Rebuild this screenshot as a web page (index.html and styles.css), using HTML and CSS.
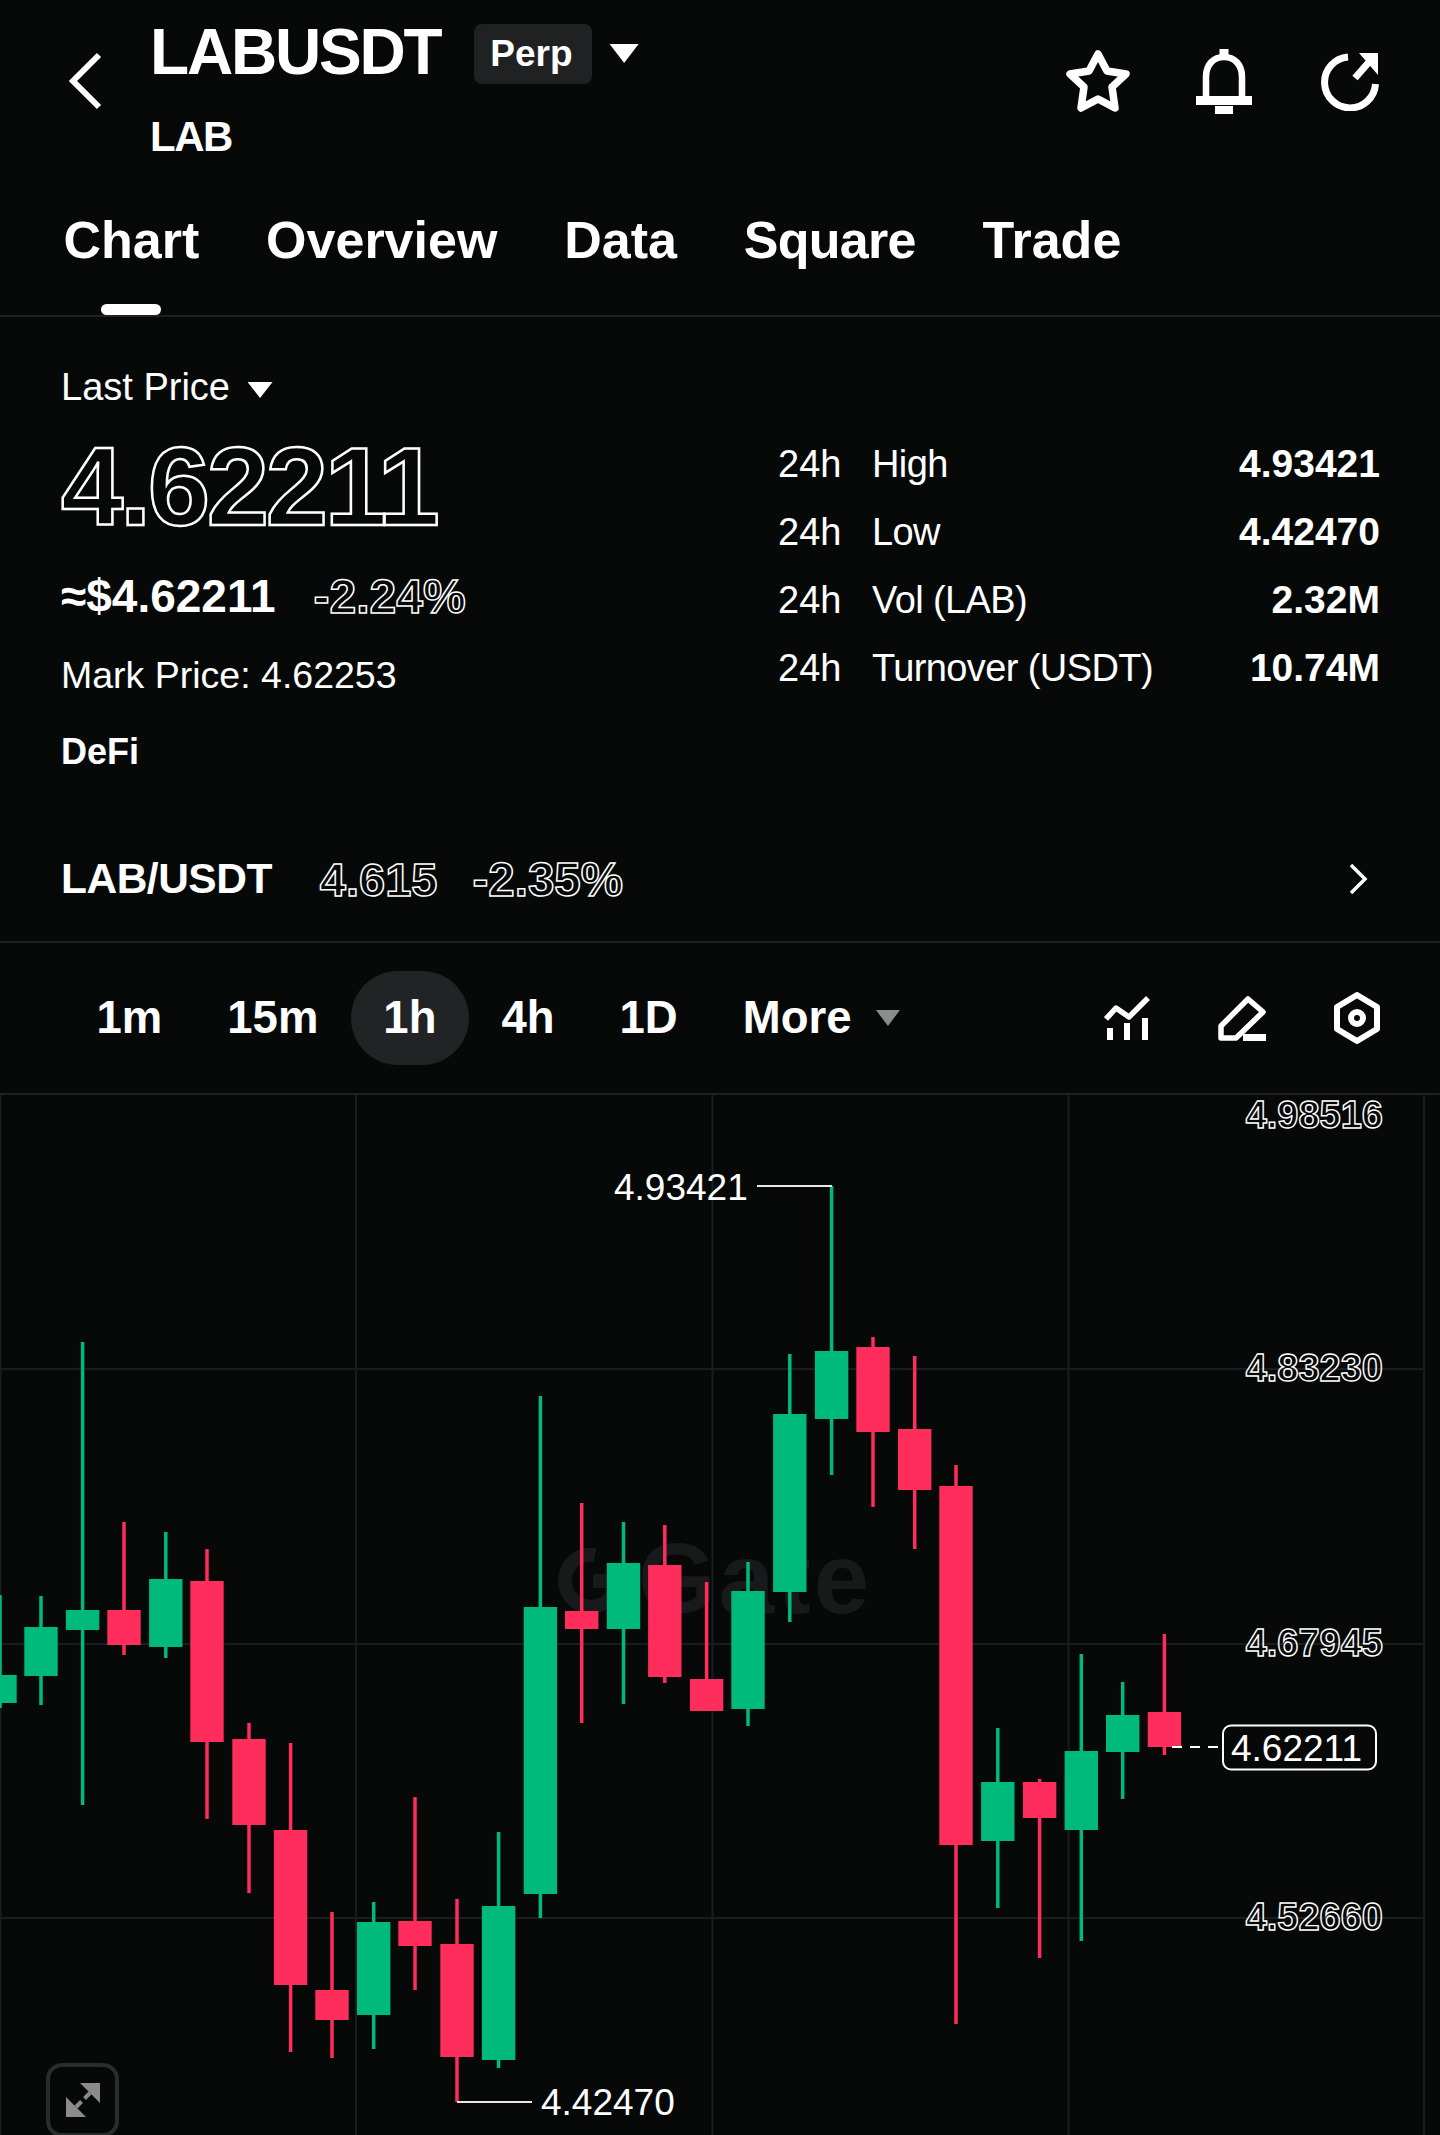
FILE: index.html
```html
<!DOCTYPE html>
<html>
  <head>
    <meta charset="UTF-8" />
    <title>LABUSDT Perp</title>
    <link rel="stylesheet" href="styles.css">
  </head>
  <body>
    <div class="page">
      <header class="top">
        <svg class="back" viewBox="0 0 33 58"><path d="M30 3 L4 29 L30 55" /></svg>
        <div class="title">
          <div class="title-row">
            <span class="symbol">LABUSDT</span>
            <span class="badge">Perp</span>
            <span class="caret caret-title"></span>
          </div>
          <div class="base">LAB</div>
        </div>
        <div class="top-icons">
          <svg class="icon-star" viewBox="0 0 66 64"><path d="M33 5 L42 22 L61 25 L47 38 L50 59 L33 50 L16 59 L19 38 L5 25 L24 22 Z" /></svg>
          <svg class="icon-bell" viewBox="0 0 56 65">
            <path class="line" d="M10 48 V28 C10 15 18 8 28 8 C38 8 46 15 46 28 V48" />
            <rect x="23.5" y="0" width="9" height="9" />
            <rect x="0" y="47" width="56" height="9" />
            <rect x="19" y="57" width="18" height="8" />
          </svg>
          <svg class="icon-share" viewBox="0 0 58 60">
            <path class="line" d="M27 6 A25.5 25.5 0 1 0 54.5 33" />
            <path class="line" d="M34 27 L48 11" />
            <path d="M38 2 H57 V24 Z" />
          </svg>
        </div>
      </header>

      <nav class="tabs">
        <a class="tab active">Chart</a>
        <a class="tab">Overview</a>
        <a class="tab">Data</a>
        <a class="tab tab-tight">Square</a>
        <a class="tab">Trade</a>
      </nav>

      <section class="info">
        <div class="price-col">
          <div class="last-label">Last Price <span class="caret caret-small"></span></div>
          <div class="last-price outline">4.62211</div>
          <div class="sub-row">
            <span class="usd">≈$4.62211</span>
            <span class="change outline">-2.24%</span>
          </div>
          <div class="mark">Mark Price: 4.62253</div>
          <div class="sector">DeFi</div>
        </div>
        <div class="stats">
          <div class="stat"><span class="period">24h</span><span class="stat-name">High</span><span class="stat-value">4.93421</span></div>
          <div class="stat"><span class="period">24h</span><span class="stat-name">Low</span><span class="stat-value">4.42470</span></div>
          <div class="stat"><span class="period">24h</span><span class="stat-name">Vol (LAB)</span><span class="stat-value">2.32M</span></div>
          <div class="stat"><span class="period">24h</span><span class="stat-name">Turnover (USDT)</span><span class="stat-value">10.74M</span></div>
        </div>
      </section>

      <section class="pair">
        <span class="pair-name">LAB/USDT</span>
        <span class="pair-price outline">4.615</span>
        <span class="pair-change outline">-2.35%</span>
        <svg class="chevron" viewBox="0 0 20 32"><path d="M3 2 L17 16 L3 30" /></svg>
      </section>

      <section class="toolbar">
        <a class="range">1m</a>
        <a class="range">15m</a>
        <a class="range active">1h</a>
        <a class="range">4h</a>
        <a class="range">1D</a>
        <a class="range">More</a>
        <span class="caret caret-more"></span>
        <div class="tools">
          <svg class="tool-indicator" viewBox="0 0 46 45">
            <path class="line" d="M2 23 L12 12 L25 21 L44 2" />
            <rect x="3" y="32" width="6" height="12" />
            <rect x="20" y="27" width="6" height="17" />
            <rect x="38" y="22" width="6" height="22" />
          </svg>
          <svg class="tool-draw" viewBox="0 0 48 46">
            <path class="line" d="M30 4 L45 17 L18 43 H3 V31 Z" />
            <rect x="25" y="39" width="23" height="7" />
          </svg>
          <svg class="tool-settings" viewBox="0 0 46 52">
            <path class="line" d="M23 3 L43 15 V37 L23 49 L3 37 V15 Z" />
            <circle class="line" cx="23" cy="26" r="6" />
          </svg>
        </div>
      </section>

      <section class="chart">
        <!-- viewBox uses page coordinates so the candle values read like the screenshot -->
        <svg class="plot" viewBox="0 1095 1440 1040">
          <g class="grid">
            <path d="M0.5 1095V2135M356 1095V2135M712.5 1095V2135M1068.5 1095V2135M1424 1095V2135" />
            <path d="M0 1369H1424M0 1644H1424M0 1918H1424" />
          </g>
          <g class="watermark">
            <path d="M595 1555 A26 26 0 1 0 617 1581 H593" />
            <text x="638" y="1613">Gate</text>
          </g>
          <g class="up">
            <path class="wick" d="M0 1595V1708M41 1596V1705M82.6 1342V1805M165.8 1532V1658M373.7 1902V2049M498.6 1832V2068M540.4 1396V1918M623.5 1522V1704M748 1562V1726M789.8 1354V1622M831.6 1186V1475M997.8 1728V1908M1081.3 1654V1941M1122.7 1682V1799" />
            <path class="body" d="M0 1675V1703M41 1627V1676M82.6 1610V1630M165.8 1579V1647M373.7 1922V2015M498.6 1906V2060M540.4 1607V1894M623.5 1563V1629M748 1591V1709M789.8 1414V1592M831.6 1351V1419M997.8 1782V1841M1081.3 1751V1830M1122.7 1715V1752" />
          </g>
          <g class="down">
            <path class="wick" d="M124 1522V1655M207 1549V1819M249 1723V1893M290.6 1743V2052M332 1912V2058M415 1797V1990M457 1899V2102M581.7 1503V1723M664.8 1525V1683M706.6 1582V1711M873 1337V1507M914.7 1356V1549M956 1465V2024M1039.6 1779V1958M1164.4 1634V1755" />
            <path class="body" d="M124 1610V1645M207 1581V1742M249 1739V1825M290.6 1830V1985M332 1990V2020M415 1921V1946M457 1944V2057M581.7 1611V1629M664.8 1565V1677M706.6 1679V1711M873 1347V1432M914.7 1429V1490M956 1486V1845M1039.6 1782V1818M1164.4 1712V1747" />
          </g>
          <path class="leader" d="M757 1186H832M457 2102H532" />
          <path class="last-line" d="M1172 1747H1222" />
          <text class="mark-label" x="614" y="1200">4.93421</text>
          <text class="mark-label" x="541" y="2115">4.42470</text>
          <text class="axis" x="1383" y="1128">4.98516</text>
          <text class="axis" x="1383" y="1381">4.83230</text>
          <text class="axis" x="1383" y="1656">4.67945</text>
          <text class="axis" x="1383" y="1930">4.52660</text>
          <rect class="tag" x="1223" y="1725.5" width="153" height="44" rx="8" />
          <text class="mark-label" x="1231" y="1761">4.62211</text>
        </svg>
        <div class="expand">
          <svg viewBox="0 0 34 34">
            <path d="M14 0 H34 V20 Z M0 14 V34 H20 Z" />
            <path class="line" d="M24 10 L18.5 15.5 M15.5 18.5 L10 24" />
          </svg>
        </div>
      </section>
    </div>
  </body>
</html>
```
FILE: styles.css
```css
body {
  margin: 0;
  background-color: #070909;
  color: #fff;
  font-family: "Liberation Sans", Arial, sans-serif;
}
.page {
  width: 1440px;
  height: 2135px;
  overflow: hidden;
}
svg {
  display: block;
  fill: #fff;
}
svg .line {
  fill: none;
  stroke: #fff;
}
.outline {
  color: transparent;
  -webkit-text-stroke: 1.5px #fff;
  font-weight: 700;
}
.caret {
  display: inline-block;
  background-color: #fff;
  clip-path: polygon(0 0, 100% 0, 50% 100%);
}

/* top bar */
.top {
  display: flex;
  height: 190px;
  padding-right: 61px;
  box-sizing: border-box;
}
.back {
  width: 33px;
  height: 58px;
  margin: 52px 48px 0 69px;
  flex: none;
  fill: none;
  stroke: #fff;
  stroke-width: 6;
}
.title-row {
  display: flex;
  align-items: center;
  padding-top: 20px;
  height: 64px;
}
.symbol {
  font-size: 64px;
  line-height: 64px;
  font-weight: 700;
  letter-spacing: -2.2px;
}
.badge {
  margin: 4px 0 0 34px;
  padding: 0 19px 0 16px;
  height: 60px;
  line-height: 60px;
  background-color: #1f2122;
  border-radius: 8px;
  font-size: 37px;
  font-weight: 700;
}
.caret-title {
  width: 29px;
  height: 19px;
  margin: 3px 0 0 18px;
}
.base {
  margin-top: 31px;
  font-size: 42px;
  line-height: 44px;
  font-weight: 700;
  letter-spacing: -1.5px;
}
.top-icons {
  display: flex;
  align-items: center;
  margin: 48px 0 0 auto;
  height: 66px;
}
.icon-star {
  width: 66px;
  height: 64px;
  fill: none;
  stroke: #fff;
  stroke-width: 7.5;
  stroke-linejoin: round;
}
.icon-bell {
  width: 56px;
  height: 65px;
  margin-left: 65px;
}
.icon-bell .line {
  stroke-width: 6.5;
}
.icon-share {
  width: 58px;
  height: 60px;
  margin-left: 69px;
}
.icon-share .line {
  stroke-width: 7;
}

/* tabs */
.tabs {
  display: flex;
  gap: 66.8px;
  height: 101px;
  padding: 24px 0 0 63.5px;
  border-bottom: 2px solid #1e2122;
}
.tab {
  position: relative;
  font-size: 52px;
  line-height: 52px;
  font-weight: 700;
}
.tab-tight {
  letter-spacing: -0.7px;
}
.tab.active::after {
  content: "";
  position: absolute;
  left: 37px;
  bottom: 0;
  width: 60px;
  height: 11px;
  border-radius: 6px;
  background-color: #fff;
}

/* price block */
.info {
  display: flex;
  height: 454px;
  padding: 0 60px 0 61px;
}
.last-label {
  margin-top: 51px;
  font-size: 38px;
  line-height: 38px;
}
.caret-small {
  position: relative;
  top: -2px;
  width: 25px;
  height: 16px;
  margin-left: 7px;
}
.last-price {
  margin-top: 26px;
  font-size: 112px;
  line-height: 110px;
  letter-spacing: -3.3px;
  -webkit-text-stroke-width: 2.5px;
}
.sub-row {
  display: flex;
  align-items: center;
  margin-top: 31px;
  height: 46px;
}
.usd {
  font-size: 46px;
  font-weight: 700;
}
.change {
  margin-left: 38px;
  font-size: 48px;
}
.mark {
  margin-top: 37px;
  font-size: 37.5px;
  line-height: 38px;
}
.sector {
  margin-top: 39px;
  font-size: 36px;
  line-height: 38px;
  font-weight: 700;
}
.stats {
  width: 602px;
  margin: 113px 0 0 auto;
}
.stat {
  display: flex;
  align-items: center;
  height: 68px;
  font-size: 38px;
}
.period {
  width: 94px;
}
.stat-name {
  flex: 1;
  letter-spacing: -0.6px;
}
.stat-value {
  font-size: 39px;
  font-weight: 700;
}

/* spot pair row */
.pair {
  display: flex;
  align-items: center;
  height: 44px;
  padding: 86px 62px 40px 61px;
  border-bottom: 2px solid #1e2122;
}
.pair-name {
  font-size: 42.5px;
  font-weight: 700;
  letter-spacing: -0.5px;
  margin-right: 48px;
}
.pair-price {
  font-size: 47px;
}
.pair-change {
  margin-left: 35px;
  font-size: 47.5px;
}
.chevron {
  width: 20px;
  height: 32px;
  margin: 0 10px 0 auto;
  fill: none;
  stroke: #fff;
  stroke-width: 3.5;
}

/* timeframe toolbar */
.toolbar {
  display: flex;
  align-items: center;
  height: 150px;
  padding: 0 60px 0 64px;
  border-bottom: 2px solid #1e2122;
}
.range {
  padding: 0 32.5px;
  height: 94px;
  line-height: 94px;
  border-radius: 47px;
  font-size: 45.5px;
  font-weight: 700;
}
.range.active {
  background-color: #212324;
}
.caret-more {
  width: 24px;
  height: 16px;
  margin-left: -8px;
  background-color: #8a8c8d;
}
.tools {
  display: flex;
  align-items: center;
  gap: 68px;
  margin-left: auto;
}
.tool-indicator {
  width: 46px;
  height: 45px;
}
.tool-indicator .line,
.tool-draw .line {
  stroke-width: 5.5;
  stroke-linejoin: round;
}
.tool-draw {
  width: 48px;
  height: 46px;
}
.tool-settings {
  width: 46px;
  height: 52px;
}
.tool-settings .line {
  stroke-width: 6;
  stroke-linejoin: round;
}

/* chart */
.chart {
  position: relative;
  height: 1040px;
}
.plot {
  width: 1440px;
  height: 1040px;
}
.plot path {
  fill: none;
}
.grid path {
  stroke: #1a1d1e;
  stroke-width: 2;
}
.watermark path {
  stroke: #17191a;
  stroke-width: 14;
}
.watermark text {
  fill: #17191a;
  font-size: 100px;
  font-weight: 700;
  letter-spacing: 3px;
}
.up path {
  stroke: #00ba7c;
}
.down path {
  stroke: #ff2d5c;
}
.wick {
  stroke-width: 3.5;
}
.body {
  stroke-width: 33.4;
}
.leader {
  stroke: #e8e8e8;
  stroke-width: 2;
}
.last-line {
  stroke: #fff;
  stroke-width: 2;
  stroke-dasharray: 10 8;
}
.mark-label {
  font-size: 37px;
  fill: #fff;
}
.axis {
  font-size: 38px;
  font-weight: 700;
  text-anchor: end;
  fill: none;
  stroke: #fff;
  stroke-width: 1.4;
}
.tag {
  fill: #070909;
  stroke: #fff;
  stroke-width: 2;
}
.expand {
  position: absolute;
  left: 46px;
  bottom: -2px;
  display: flex;
  align-items: center;
  justify-content: center;
  width: 73px;
  height: 74px;
  box-sizing: border-box;
  border: 4px solid #2a2d2e;
  border-radius: 16px;
}
.expand svg {
  width: 34px;
  height: 34px;
  fill: #8b8b8b;
}
.expand .line {
  stroke: #8b8b8b;
  stroke-width: 4;
}
```
